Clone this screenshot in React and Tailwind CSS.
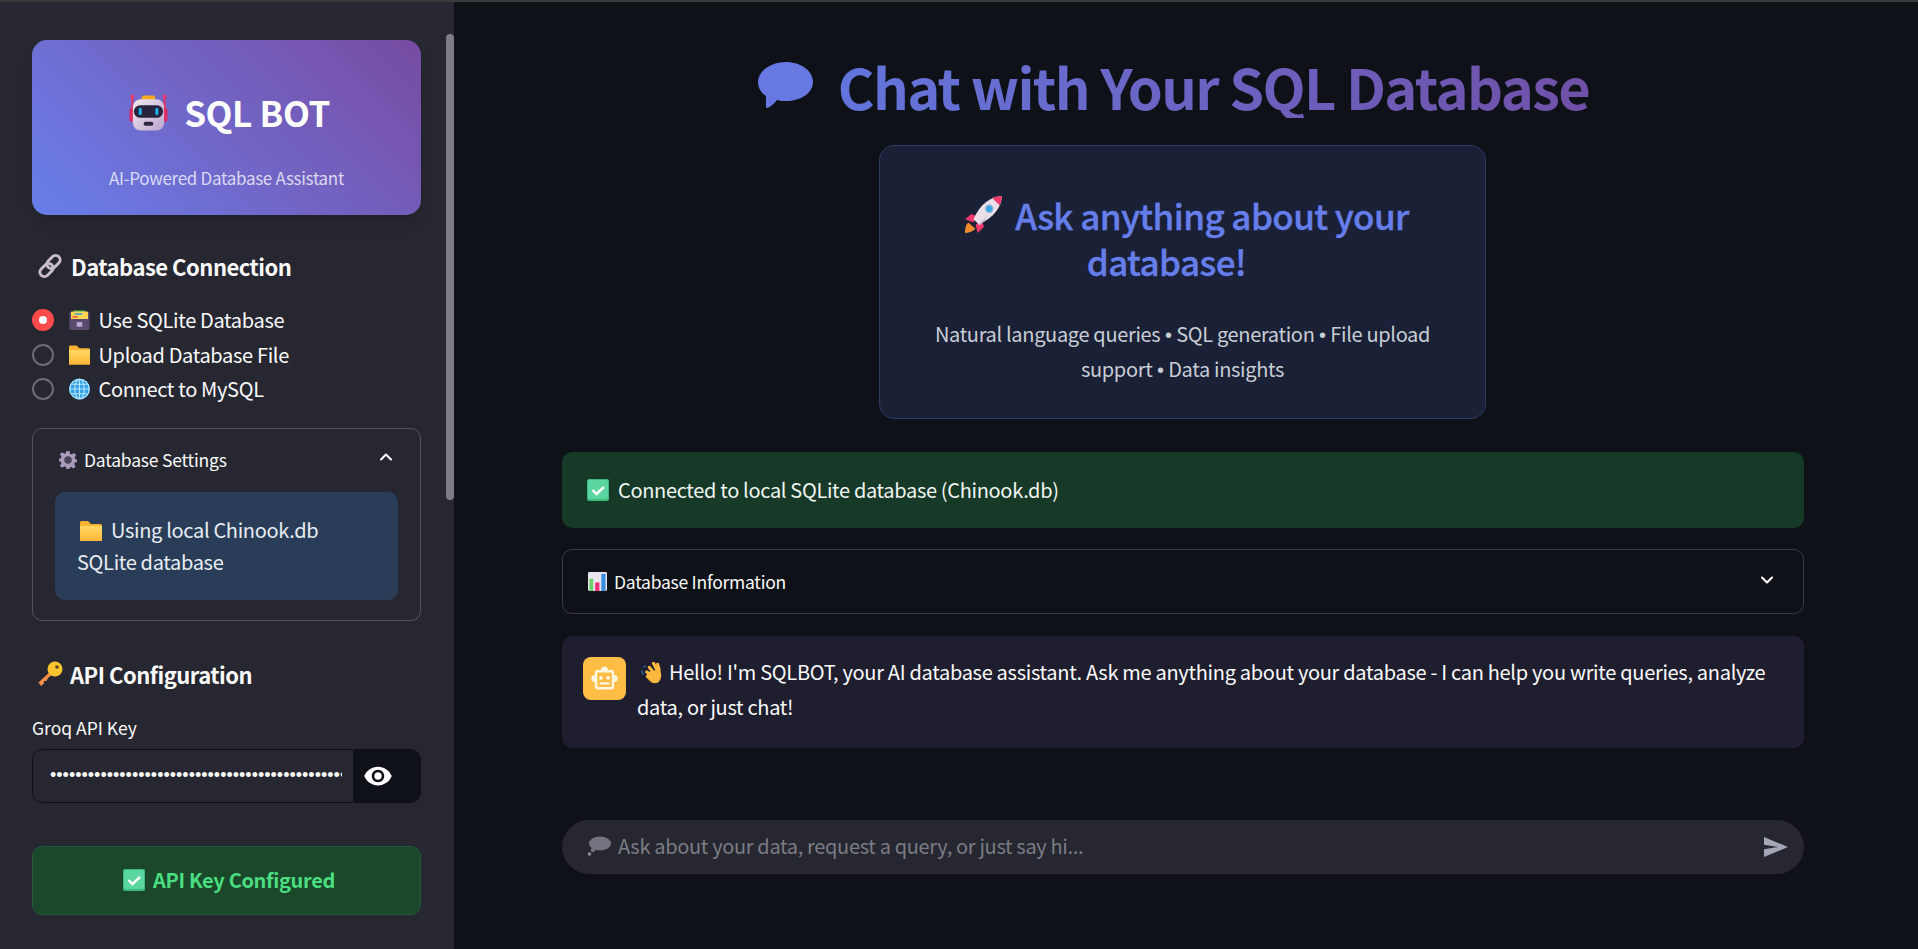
import React from "react";
import { ChevronUp, ChevronDown } from "lucide-react";

function Robot({ className }) {
  return (
    <svg viewBox="0 0 40 38" className={className}>
      <defs>
        <linearGradient id="robotHead" x1="0" y1="0" x2="1" y2="1">
          <stop offset="0" stopColor="#efe9ee" />
          <stop offset="1" stopColor="#bda6cf" />
        </linearGradient>
      </defs>
      <rect x="2.500" y="4" width="2" height="14" fill="#e8315f" />
      <rect x="35.500" y="4" width="2" height="14" fill="#e8315f" />
      <circle cx="3.500" cy="3" r="2" fill="#f0386b" />
      <circle cx="36.500" cy="3" r="2" fill="#f0386b" />
      <rect x="0.500" y="15" width="5" height="14" rx="2" fill="#d92c63" />
      <rect x="34.500" y="15" width="5" height="14" rx="2" fill="#d92c63" />
      <rect x="13" y="2" width="14" height="5" rx="2" fill="#f6a91f" />
      <rect x="4" y="6" width="32" height="32" rx="8" fill="url(#robotHead)" />
      <rect x="5" y="12" width="30" height="13" rx="6.500" fill="#28243f" />
      <rect x="10" y="15" width="3" height="7" rx="1" fill="#1eb2ee" />
      <rect x="27" y="15" width="3" height="7" rx="1" fill="#1eb2ee" />
      <rect x="15" y="29" width="10" height="4" rx="2" fill="#2e2540" />
    </svg>
  );
}

function LinkEmoji({ className }) {
  return (
    <svg viewBox="0 0 26 26" className={className} fill="none" stroke="#c9bdcb" strokeWidth="3">
      <rect x="12" y="1.500" width="9" height="15" rx="4.500" transform="rotate(45 16.500 9)" />
      <rect x="5" y="9.500" width="9" height="15" rx="4.500" transform="rotate(45 9.500 17)" />
    </svg>
  );
}

function FileBox({ className }) {
  return (
    <svg viewBox="0 0 22 22" className={className}>
      <rect x="5" y="1" width="12" height="6" fill="#3fb950" />
      <rect x="2" y="2" width="18" height="9" rx="1" fill="#ffd451" />
      <rect x="6" y="4" width="8" height="1.500" fill="#2f9ae0" />
      <rect x="4" y="7" width="5" height="1.500" fill="#ea4d4d" />
      <rect x="0.500" y="10" width="21" height="11.500" rx="1.500" fill="#5a4b6e" />
      <rect x="8" y="13" width="6" height="5" rx="1" fill="#b9a6d6" />
      <rect x="0.500" y="3" width="1.500" height="8" fill="#5a4b6e" />
      <rect x="20" y="3" width="1.500" height="8" fill="#5a4b6e" />
    </svg>
  );
}

function Folder({ className }) {
  return (
    <svg viewBox="0 0 22 20" className={className}>
      <defs>
        <linearGradient id="folderFill" x1="0" y1="0" x2="0" y2="1">
          <stop offset="0" stopColor="#ffd966" />
          <stop offset="1" stopColor="#ffb636" />
        </linearGradient>
      </defs>
      <path d="M0 1.500A1.500 1.500 0 0 1 1.500 0H8l3 3h9.500A1.500 1.500 0 0 1 22 4.500V20H0Z" fill="#f9b233" />
      <rect x="0" y="5" width="22" height="15" fill="url(#folderFill)" />
    </svg>
  );
}

function Globe({ className }) {
  return (
    <svg viewBox="0 0 22 22" className={className} fill="none">
      <circle cx="11" cy="11" r="11" fill="#2f9fe8" />
      <g stroke="#b9e6fb" strokeWidth="1.200">
        <circle cx="11" cy="11" r="10.200" />
        <ellipse cx="11" cy="11" rx="5" ry="10.200" />
        <path d="M11 1v20M1 11h20M2.500 6h17M2.500 16h17" />
      </g>
    </svg>
  );
}

function Gear({ className }) {
  return (
    <svg viewBox="0 0 24 24" className={className}>
      <path
        fill="#a99bbb"
        d="M10 0h4l.8 3.600 2.100.9L20 2.500 22.800 5.400l-2 3.100.9 2.100L24 11.500v3l-2.900.8-.9 2.100 2 3.100-2.800 2.800-3.100-2-2.100.9L14 24h-4l-.8-2.700-2.100-.9-3.100 2-2.800-2.800 2-3.100-.9-2.100L0 13.500v-3l2.300-1 .9-2.100-2-3.100L4 1.500l3.100 2 2.100-.9Z"
      />
      <circle cx="12" cy="12" r="5" fill="#4a4358" />
    </svg>
  );
}

function KeyEmoji({ className }) {
  return (
    <svg viewBox="0 0 26 26" className={className}>
      <path d="M15 9 1.500 21.500 4 25l3-2.500v-2.500h2.500l1.500-3 6-5Z" fill="#f4904a" />
      <circle cx="18" cy="8" r="7.500" fill="#fcc42f" />
      <circle cx="20" cy="6" r="1.800" fill="#5a4225" />
    </svg>
  );
}

function Rocket({ className }) {
  return (
    <svg viewBox="0 0 38 38" className={className}>
      <path d="M4 27c-3 3-3 7-3 10 3 0 7-1 10-4Z" fill="#f28a2e" />
      <path d="M7 19 1 24l8 3 3-6Z" fill="#f0386b" />
      <path d="M19 31 13 37l-2-8 6-3Z" fill="#f0386b" />
      <path d="M36 2C26 2 15 10 9 24l5 5C28 23 36 12 36 2Z" fill="#eadfe8" />
      <path d="M36 2c-4 0-7 1-9 2l7 7c1-3 2-6 2-9Z" fill="#f0386b" />
      <path d="M14 29 23 20c-3 4-5 7-8 10Z" fill="#c5b0cf" />
      <circle cx="24" cy="14" r="4" fill="#8ab4d8" />
      <circle cx="24" cy="14" r="2.800" fill="#38a9e8" />
    </svg>
  );
}

function Check({ className }) {
  return (
    <svg viewBox="0 0 22 22" className={className}>
      <rect width="22" height="22" rx="2" fill="#3dbb7d" />
      <rect x="1" y="1" width="20" height="19" rx="2" fill="#5bd6a0" />
      <path d="m5.500 11 4 4 7.500-7" fill="none" stroke="#fff" strokeWidth="2.400" />
    </svg>
  );
}

function BarChart({ className }) {
  return (
    <svg viewBox="0 0 20 20" className={className}>
      <rect width="20" height="20" rx="1.500" fill="#e9e6ee" />
      <rect x="1.500" y="7" width="4" height="13" fill="#6ccf6a" />
      <rect x="7.500" y="11" width="4.500" height="9" fill="#ee2f7c" />
      <rect x="14" y="2" width="4.500" height="18" fill="#3a8ee0" />
    </svg>
  );
}

function Wave({ className }) {
  return (
    <svg viewBox="0 0 24 24" className={className}>
      <path d="M1 9c0 2 .5 3.500 1.500 5M5 4c-1 .5-1.500 1-2 2" fill="none" stroke="#3178c6" strokeWidth="1.200" />
      <g fill="#fcb73e">
        <rect x="4" y="11" width="10" height="3.500" rx="1.700" transform="rotate(35 9 12.700)" />
        <rect x="6" y="7" width="11" height="3.500" rx="1.700" transform="rotate(50 11.500 8.700)" />
        <rect x="10" y="3" width="11" height="3.500" rx="1.700" transform="rotate(62 15.500 4.700)" />
        <rect x="14" y="4" width="10" height="3.500" rx="1.700" transform="rotate(75 19 5.700)" />
        <path d="M8 11 20 8c3 5 3 10-1 14-4 2-7 1-9-1l-5-5Z" />
      </g>
    </svg>
  );
}

function Thought({ className }) {
  return (
    <svg viewBox="0 0 24 20" className={className}>
      <ellipse cx="13" cy="7.500" rx="11" ry="7" fill="#77727f" />
      <circle cx="6" cy="14" r="2.200" fill="#77727f" />
      <circle cx="2.500" cy="18" r="1.800" fill="#8d8a94" />
    </svg>
  );
}

function SpeechBubble({ className }) {
  return (
    <svg viewBox="0 0 56 48" className={className}>
      <path
        fill="#6878e2"
        d="M29 1c15 0 27 9 27 20S44 40 29 40c-3 0-6 0-9-1-3 4-7 7-10 8-1 0-1-1-1-2V35C4 32 1 27 1 21 1 10 14 1 29 1Z"
      />
    </svg>
  );
}

function Radio({ selected, icon, label }) {
  return (
    <div className="flex items-center h-[34.5px]">
      {selected ? (
        <div className="w-[22px] h-[22px] rounded-full bg-[#ff4b4b] flex items-center justify-center">
          <div className="w-[8px] h-[8px] rounded-full bg-white" />
        </div>
      ) : (
        <div className="w-[22px] h-[22px] rounded-full border-2 border-[#6b6c75]" />
      )}
      <span className="w-[21px] h-[21px] ml-[14.5px] flex items-center">{icon}</span>
      <span className="ml-[9px] text-[20px] leading-[28px] tracking-[-0.33px] text-[#fafafa]">{label}</span>
    </div>
  );
}

function Dot() {
  return <span className="font-['Liberation_Sans'] leading-none mx-[0.4px]">•</span>;
}

function Sidebar() {
  return (
    <aside className="relative w-[454px] shrink-0 h-full bg-[#262730] pl-[32px] pt-[38px]">
      <div className="w-[389px] h-[175px] rounded-[15px] bg-linear-45 from-[#667eea] to-[#764ba2] shadow-lg flex flex-col items-center">
        <div className="flex items-center mt-[50px] h-[44px] ml-[6px]">
          <Robot className="w-[39px] h-[38px]" />
          <span className="ml-[16px] text-[35px] leading-[44px] font-bold tracking-[-0.4px] text-white">SQL BOT</span>
        </div>
        <p className="mt-[32px] text-[17px] leading-[24px] tracking-[-0.3px] text-white/75">AI-Powered Database Assistant</p>
      </div>

      <h2 className="mt-[35px] flex items-center h-[32px] ml-[5px] text-[22px] font-bold tracking-[-0.5px] text-[#fafafa]">
        <LinkEmoji className="w-[26px] h-[26px]" />
        <span className="ml-[8px]">Database Connection</span>
      </h2>

      <div className="mt-[21px]">
        <Radio selected icon={<FileBox className="w-[22px] h-[22px]" />} label="Use SQLite Database" />
        <Radio icon={<Folder className="w-[21px] h-[20px]" />} label="Upload Database File" />
        <Radio icon={<Globe className="w-[22px] h-[22px]" />} label="Connect to MySQL" />
      </div>

      <div className="mt-[21px] w-[389px] h-[193px] rounded-[10px] border border-[#53545c] px-[22px]">
        <div className="flex items-center h-[63px] pl-[4px]">
          <Gear className="w-[18px] h-[18px]" />
          <span className="ml-[7px] text-[17.5px] tracking-[-0.2px] text-[#fafafa]">Database Settings</span>
          <ChevronUp className="ml-auto mr-[2px] mb-[6px] w-[20px] h-[20px] text-white" strokeWidth={2.5} />
        </div>
        <div className="h-[108px] rounded-[10px] bg-[#2a3d58] px-[22px] pt-[22px] text-[20px] leading-[32px] tracking-[-0.33px] text-[#e8edf3]">
          <Folder className="inline-block align-[-3px] w-[22px] h-[20px] ml-[3px] mr-[9px]" />
          Using local Chinook.db SQLite database
        </div>
      </div>

      <h2 className="mt-[38px] flex items-center h-[32px] ml-[5px] text-[22px] font-bold tracking-[-0.5px] text-[#fafafa]">
        <KeyEmoji className="w-[26px] h-[26px] mb-[2px]" />
        <span className="ml-[7px]">API Configuration</span>
      </h2>

      <label className="block mt-[25px] h-[24px] text-[17.5px] leading-[24px] text-[#fafafa]">Groq API Key</label>
      <div className="mt-[9px] w-[389px] h-[54px] rounded-[10px] border border-[#0e1117] flex overflow-hidden bg-[#262730]">
        <input
          type="password"
          readOnly
          value="gsk_abcdefghijklmnopqrstuvwxyz0123456789ABCDEFGHIJKLMNOPQRSTUV"
          className="w-[320px] shrink-0 pl-[17px] pr-[11px] bg-transparent outline-none font-['Liberation_Sans'] text-[18px] text-[#fafafa]"
        />
        <div className="flex-1 bg-[#0e1117] flex items-center pl-[10px]">
          <svg viewBox="0 0 24 24" className="w-[30px] h-[30px]" fill="#fff">
            <path d="M12 4.500C7 4.500 2.730 7.610 1 12c1.730 4.390 6 7.500 11 7.500s9.270-3.110 11-7.500c-1.730-4.390-6-7.500-11-7.500ZM12 17c-2.760 0-5-2.240-5-5s2.240-5 5-5 5 2.240 5 5-2.240 5-5 5Zm0-8c-1.660 0-3 1.340-3 3s1.340 3 3 3 3-1.340 3-3-1.340-3-3-3Z" />
          </svg>
        </div>
      </div>

      <div className="mt-[43px] w-[389px] h-[69px] rounded-[10px] border border-[#22593a] bg-[#1b472b] flex items-center justify-center pl-[5px]">
        <Check className="w-[22px] h-[22px]" />
        <span className="ml-[8px] text-[20px] font-bold tracking-[-0.33px] text-[#4ade80]">API Key Configured</span>
      </div>

      <div className="absolute left-[446px] top-[32px] w-[8px] h-[466px] rounded-full bg-[#7d7d85]" />
    </aside>
  );
}

function MainArea() {
  return (
    <main className="flex-1 h-full bg-[#0e1117] pl-[108px] pr-[114px] pt-[52px]">
      <h1 className="flex items-center justify-center h-[64px] mr-[20px]">
        <SpeechBubble className="w-[56px] h-[48px] mb-[2px]" />
        <span className="ml-[25px] text-[56px] leading-[64px] font-bold tracking-[-1.6px] bg-linear-to-r from-[#6275dc] to-[#7050a8] bg-clip-text text-transparent">
          Chat with Your SQL Database
        </span>
      </h1>

      <div className="mt-[27px] w-[607px] h-[274px] rounded-[15px] border border-[#2d3a66] bg-[#1a2035] px-[48px] pt-[46px] text-center ml-[317px]">
        <h2 className="text-[35px] leading-[46px] font-medium tracking-[-0.6px] [-webkit-text-stroke:0.4px] text-[#667eea]">
          <span className="block whitespace-nowrap">
            <Rocket className="inline-block align-[-4px] w-[40px] h-[40px] ml-[8px] mr-[11px]" />
            Ask anything about your
          </span>
          <span className="block mr-[32px]">database!</span>
        </h2>
        <p className="mt-[32px] text-[20px] leading-[35px] tracking-[-0.33px] text-[#c9ced6]">
          Natural language queries <Dot /> SQL generation <Dot /> File upload support <Dot /> Data insights
        </p>
      </div>

      <div className="mt-[33px] h-[76px] rounded-[10px] bg-[#173928] flex items-center pl-[25px] text-[20px] tracking-[-0.33px] text-[#f0f5f1]">
        <Check className="w-[22px] h-[22px]" />
        <span className="ml-[9px]">Connected to local SQLite database (Chinook.db)</span>
      </div>

      <div className="mt-[21px] h-[65px] rounded-[10px] border border-[#3c3d44] flex items-center pl-[25px] pr-[26px]">
        <BarChart className="w-[19px] h-[19px]" />
        <span className="ml-[7px] mt-[1px] text-[17.5px] tracking-[-0.25px] text-[#fafafa]">Database Information</span>
        <ChevronDown className="ml-auto mb-[4px] w-[20px] h-[20px] text-white" strokeWidth={2.5} />
      </div>

      <div className="mt-[22px] h-[112px] rounded-[10px] bg-[#1e1e2e] flex pl-[21px] pt-[21px] pr-[20px]">
        <div className="w-[43px] h-[43px] shrink-0 rounded-[8px] bg-[#ffbd45] flex items-center justify-center">
          <svg viewBox="0 0 24 24" className="w-[29px] h-[29px]" fill="#fff6e0">
            <path d="M20 9V7c0-1.100-.9-2-2-2h-3c0-1.660-1.340-3-3-3S9 3.340 9 5H6c-1.100 0-2 .9-2 2v2c-1.660 0-3 1.340-3 3s1.340 3 3 3v4c0 1.100.9 2 2 2h12c1.100 0 2-.9 2-2v-4c1.660 0 3-1.340 3-3s-1.340-3-3-3Zm-2 10H6V7h12v12Zm-9-6c-.83 0-1.500-.67-1.500-1.500S8.170 10 9 10s1.500.67 1.500 1.500S9.830 13 9 13Zm7.500-1.500c0 .83-.67 1.500-1.500 1.500s-1.500-.67-1.500-1.500.67-1.500 1.500-1.500 1.500.67 1.500 1.500ZM8 15h8v2H8v-2Z" />
          </svg>
        </div>
        <p className="ml-[11px] mt-[-3px] text-[20px] leading-[35px] tracking-[-0.3px] text-[#fafafa]">
          <Wave className="inline-block align-[-4px] w-[22px] h-[22px] ml-[4px] mr-[6px]" />
          Hello! I'm SQLBOT, your AI database assistant. Ask me anything about your database - I can help you write queries, analyze data, or just chat!
        </p>
      </div>

      <div className="mt-[72px] h-[54px] rounded-full bg-[#262730] flex items-center pl-[25px] pr-[16px]">
        <Thought className="w-[24px] h-[20px] mb-[3px] shrink-0" />
        <input
          placeholder="Ask about your data, request a query, or just say hi..."
          className="flex-1 ml-[7px] mb-[2px] bg-transparent outline-none text-[20px] tracking-[-0.33px] text-[#fafafa] placeholder:text-[#7b7c84]"
        />
        <svg viewBox="0 0 24 20" className="w-[24px] h-[20px]" fill="#a3a8b8">
          <path d="M0 0 24 10 0 20v-7.800L14 10 0 7.800Z" />
        </svg>
      </div>
    </main>
  );
}

export default function App() {
  return (
    <div className="h-screen w-full overflow-hidden flex flex-col bg-[#0e1117] font-['Noto_Sans_CJK_SC','Source_Sans_Pro',sans-serif]">
      <div className="h-[2px] shrink-0 bg-[#3a3a3a]" />
      <div className="flex-1 flex min-h-0">
        <Sidebar />
        <MainArea />
      </div>
    </div>
  );
}
